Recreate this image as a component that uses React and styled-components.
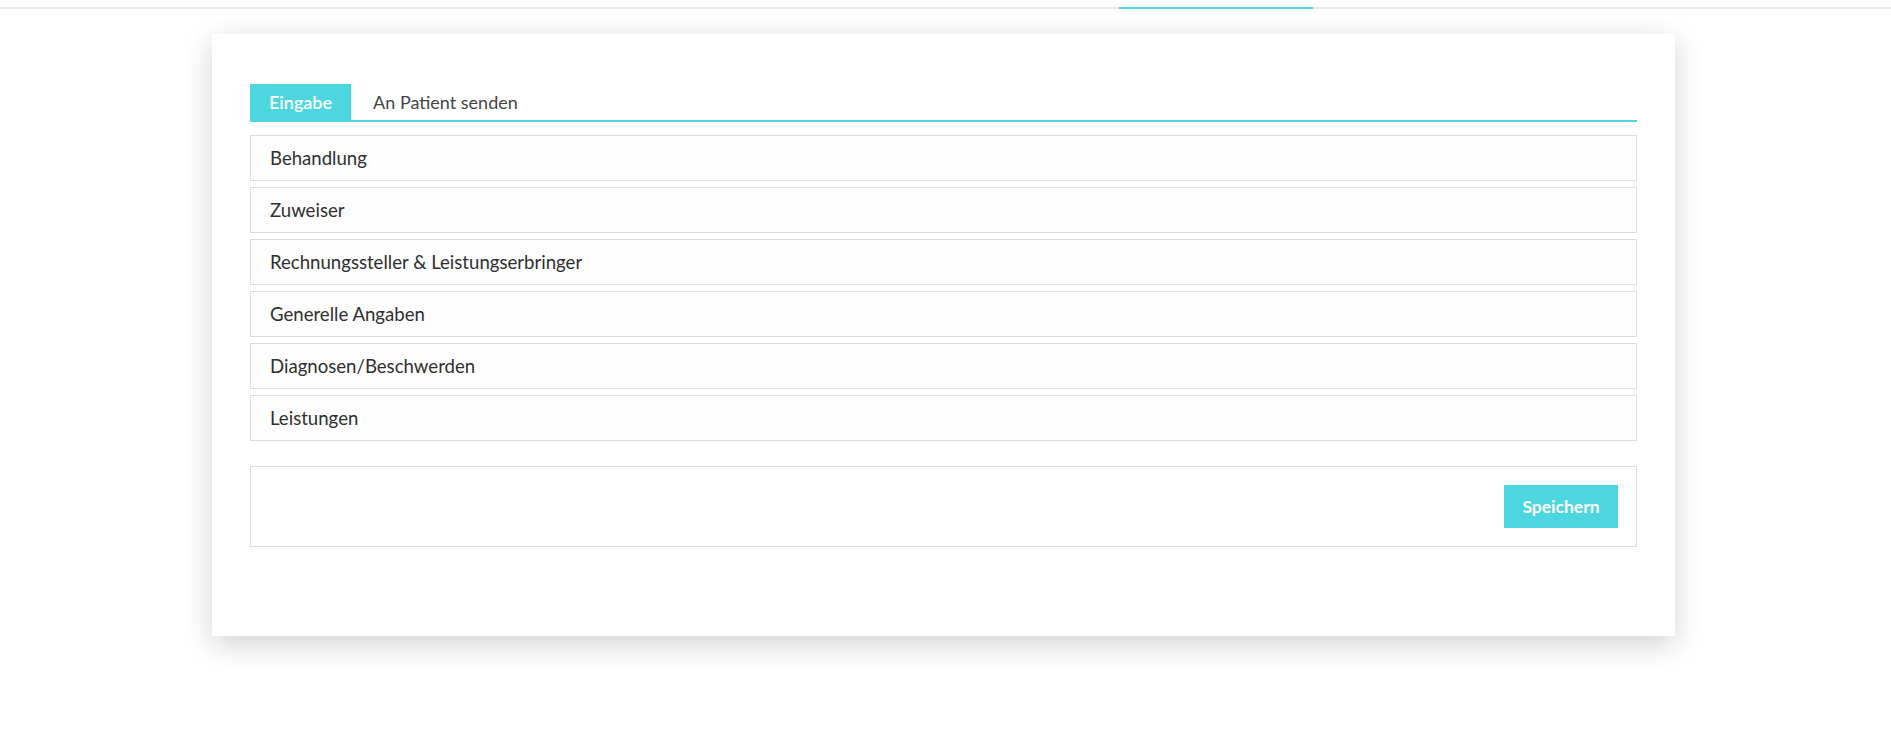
import React from "react";
import styled, { createGlobalStyle } from "styled-components";

const GlobalStyle = createGlobalStyle`
  html, body { margin: 0; padding: 0; background: #ffffff; }
  body { font-family: Lato, "Open Sans", sans-serif; color: #333333; }
  * { box-sizing: border-box; }
`;

const Page = styled.div`
  min-height: 747px;
  padding-bottom: 60px;
  background: #ffffff;
`;

const TopBar = styled.div`
  display: flex;
  height: 2px;
  margin-top: 7px;
  background: #ebebeb;
`;

const TopSpacer = styled.div`
  width: ${(p) => p.$w}px;
  flex: ${(p) => (p.$w ? "none" : "1")};
  background: ${(p) => (p.$active ? "#4cd6df" : "transparent")};
`;

const Card = styled.div`
  width: 1463px;
  margin: 25px 0 0 212px;
  padding: 50px 38px 89px;
  background: #ffffff;
  box-shadow: 0 8px 28px rgba(0, 0, 0, 0.18);
`;

const TabList = styled.div`
  display: flex;
  border-bottom: 2px solid #4cd6df;
  height: 38px;
`;

const Tab = styled.button`
  height: 36px;
  padding: 0 ${(p) => (p.$active ? "19px" : "22px")};
  border: none;
  margin: 0;
  font-family: inherit;
  font-size: 18px;
  font-weight: ${(p) => (p.$active ? 600 : 400)};
  color: ${(p) => (p.$active ? "#ffffff" : "#444444")};
  background: ${(p) => (p.$active ? "#4cd6df" : "transparent")};
  cursor: pointer;
`;

const Sections = styled.div`
  display: flex;
  flex-direction: column;
  gap: 6px;
  margin-top: 13px;
`;

const SectionRow = styled.div`
  height: 46px;
  display: flex;
  align-items: center;
  padding: 0 19px;
  border: 1px solid #dcdcdc;
  font-size: 18.6px;
  color: #2f2f2f;
  background: #fdfdfd;
`;

const Footer = styled.div`
  margin-top: 25px;
  border: 1px solid #dcdcdc;
  padding: 18px 18px;
  display: flex;
  justify-content: flex-end;
`;

const SaveButton = styled.button`
  width: 114px;
  height: 43px;
  border: none;
  background: #4cd6df;
  color: #ffffff;
  font-family: inherit;
  font-size: 17.5px;
  font-weight: 700;
  cursor: pointer;
`;

const sections = [
  "Behandlung",
  "Zuweiser",
  "Rechnungssteller & Leistungserbringer",
  "Generelle Angaben",
  "Diagnosen/Beschwerden",
  "Leistungen",
];

export default function App() {
  return (
    <Page>
      <GlobalStyle />
      <TopBar>
        <TopSpacer $w={1119} />
        <TopSpacer $w={194} $active />
        <TopSpacer />
      </TopBar>
      <Card>
        <TabList>
          <Tab $active>Eingabe</Tab>
          <Tab>An Patient senden</Tab>
        </TabList>
        <Sections>
          {sections.map((s) => (
            <SectionRow key={s}>{s}</SectionRow>
          ))}
        </Sections>
        <Footer>
          <SaveButton>Speichern</SaveButton>
        </Footer>
      </Card>
    </Page>
  );
}
